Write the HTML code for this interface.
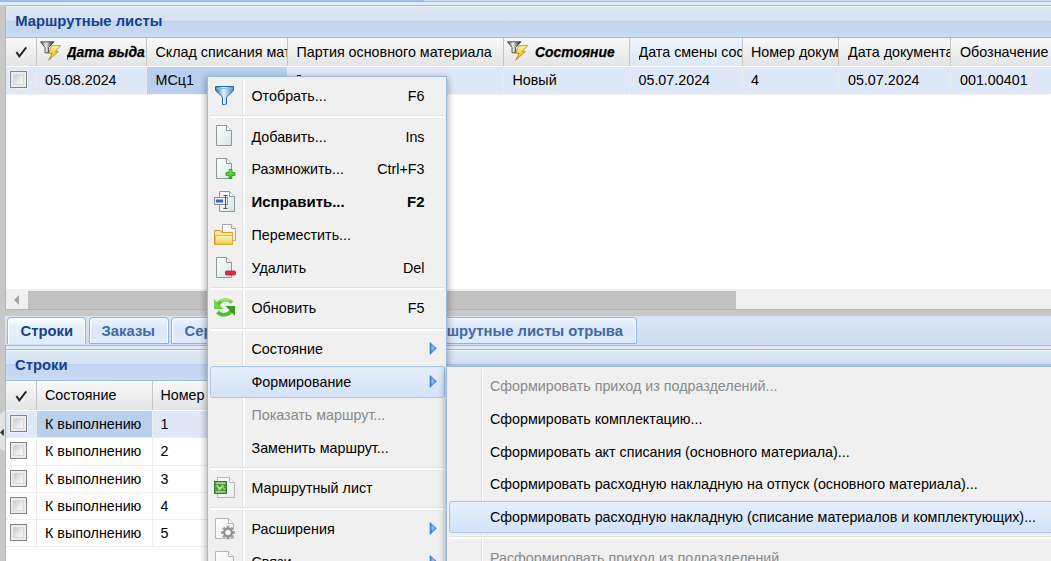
<!DOCTYPE html><html><head><meta charset="utf-8"><style>
*{margin:0;padding:0;box-sizing:border-box}
html,body{width:1051px;height:561px;overflow:hidden;background:#c8c8c8;position:relative;font-family:"Liberation Sans",sans-serif}
.a{position:absolute}
.t{position:absolute;white-space:nowrap;line-height:16px}
.hdrpanel{background:linear-gradient(to bottom,#f2f6fb 0,#f2f6fb 1px,#dce7f5 1px,#d5e2f3 15px,#b9cfee 15px,#b9cfee 16px,#c3d6f0 16px,#c6d8f1 26px,#cddcf2 31px)}.hdrpanel2{background:linear-gradient(to bottom,#f2f6fb 0,#f2f6fb 1px,#dce7f5 1px,#d5e2f3 14px,#b9cfee 14px,#b9cfee 15px,#c3d6f0 15px,#c6d8f1 25px,#cddcf2 30px)}
.gh{background:linear-gradient(to bottom,#f9f9f9,#e3e4e6)}
.ghov{background:linear-gradient(to bottom,#eef4fc 0,#dde9f9 100%)}
.cb{position:absolute;width:17px;height:17px;border:1px solid #858585;background:#ececec;box-shadow:0 0 0 1px rgba(255,255,255,0.45)}.cb::after{content:'';position:absolute;left:2px;top:2px;width:11px;height:11px;box-sizing:border-box;border:1px solid #d6d9de;background:linear-gradient(135deg,#c3c8d2 0,#e9eaec 55%,#f7f7f7 100%)}
.sep{position:absolute;width:1px;background:#c4c4c4}
</style></head><body><svg width="0" height="0" style="position:absolute"><defs>
<linearGradient id="gDoc" x1="0" y1="0" x2="1" y2="1"><stop offset="0" stop-color="#ffffff"/><stop offset="0.5" stop-color="#eaf3f3"/><stop offset="1" stop-color="#d3e4e4"/></linearGradient>
<linearGradient id="gDocW" x1="0" y1="0" x2="1" y2="1"><stop offset="0" stop-color="#ffffff"/><stop offset="1" stop-color="#ececec"/></linearGradient>
<linearGradient id="gFun" x1="0" y1="0" x2="1" y2="0"><stop offset="0" stop-color="#2f6aa9"/><stop offset="0.45" stop-color="#e6f3fb"/><stop offset="1" stop-color="#3b86c9"/></linearGradient>
<linearGradient id="gFunG" x1="0" y1="0" x2="1" y2="0"><stop offset="0" stop-color="#4a4a4a"/><stop offset="0.4" stop-color="#eeeeee"/><stop offset="0.75" stop-color="#6a6a6a"/><stop offset="1" stop-color="#2e2e2e"/></linearGradient>
<linearGradient id="gBolt" x1="0" y1="0" x2="0" y2="1"><stop offset="0" stop-color="#fff6b0"/><stop offset="0.5" stop-color="#f3d23a"/><stop offset="1" stop-color="#e8b820"/></linearGradient>
<linearGradient id="gGreen" x1="0" y1="0" x2="0" y2="1"><stop offset="0" stop-color="#9be86a"/><stop offset="1" stop-color="#3aa51e"/></linearGradient>
<linearGradient id="gPlus" x1="0" y1="0" x2="0" y2="1"><stop offset="0" stop-color="#7ee05a"/><stop offset="1" stop-color="#34b21c"/></linearGradient>
<linearGradient id="gFold" x1="0" y1="0" x2="0" y2="1"><stop offset="0" stop-color="#fff3c2"/><stop offset="1" stop-color="#f1cf3e"/></linearGradient>
<linearGradient id="gArr" x1="0" y1="0" x2="1" y2="0"><stop offset="0" stop-color="#2b67c6"/><stop offset="1" stop-color="#83b0ec"/></linearGradient>
<linearGradient id="gHi" x1="0" y1="0" x2="0" y2="1"><stop offset="0" stop-color="#e7f0fc"/><stop offset="1" stop-color="#d3e3f9"/></linearGradient>
<radialGradient id="ag" cx="0.45" cy="0.45" r="0.6"><stop offset="0" stop-color="#9cc6f5"/><stop offset="0.6" stop-color="#4f8fe0"/><stop offset="1" stop-color="#2a68cc"/></radialGradient>
</defs></svg>
<div class="a" style="left:0;top:0;width:424px;height:1px;background:#a0bee7"></div>
<div class="a" style="left:424px;top:0;width:627px;height:1px;background:#d3deee"></div>
<div class="a" style="left:0;top:1px;width:1051px;height:1px;background:#99bbe8"></div>
<div class="a" style="left:0;top:2px;width:1051px;height:3px;background:#deecfd"></div>
<div class="a" style="left:5px;top:5px;width:1046px;height:305px;background:#fff;border:1px solid #99bbe8;border-right:none"></div>
<div class="a hdrpanel" style="left:6px;top:6px;width:1045px;height:31px"></div>
<div class="a" style="left:6px;top:37px;width:1045px;height:1px;background:#99bbe8"></div>
<div class="t" style="left:15.2px;top:12.5px;font-size:14.8px;font-weight:bold;color:#15428b;">Маршрутные листы</div>
<div class="a gh" style="left:6px;top:38px;width:1045px;height:28px"></div>
<div class="a" style="left:6px;top:66px;width:1045px;height:1px;background:#fff"></div>
<div class="sep" style="left:36px;top:38px;height:28px"></div>
<div class="sep" style="left:146px;top:38px;height:28px"></div>
<div class="sep" style="left:287px;top:38px;height:28px"></div>
<div class="sep" style="left:503px;top:38px;height:28px"></div>
<div class="sep" style="left:629px;top:38px;height:28px"></div>
<div class="sep" style="left:742px;top:38px;height:28px"></div>
<div class="sep" style="left:838px;top:38px;height:28px"></div>
<div class="sep" style="left:950px;top:38px;height:28px"></div>
<div class="a ghov" style="left:630px;top:38px;width:112px;height:28px"></div>
<svg class="a" style="left:15px;top:46px" width="13" height="13" viewBox="0 0 13 13"><path d="M1.4 6 L4.3 10.3 L11.3 1.4" fill="none" stroke="#222" stroke-width="1.9"/></svg>
<svg class="a" style="left:39px;top:40px" width="23" height="23" viewBox="39 40 23 23"><path d="M40.5 41.8 H54 L48.5 47.5 V52.8 H45 V47.5 Z" fill="url(#gFunG)" stroke="#4a4a4a" stroke-width="0.9"/><path d="M51.5 45.6 H60.6 L55.2 51.6 H58.4 L48.6 60.2 L52.2 53.4 H48.8 Z" fill="url(#gBolt)" stroke="#a07818" stroke-width="0.7"/></svg>
<div class="t" style="left:66.5px;top:44px;font-size:13.9px;font-weight:bold;color:#000;font-style:italic;-webkit-text-stroke:0.25px #000;width:79px;overflow:hidden">Дата выда</div>
<div class="t" style="left:155.5px;top:44px;font-size:14.3px;font-weight:normal;color:#000;width:131px;overflow:hidden">Склад списания мат</div>
<div class="t" style="left:296.5px;top:44px;font-size:14.3px;font-weight:normal;color:#000;">Партия основного материала</div>
<svg class="a" style="left:506px;top:40px" width="23" height="23" viewBox="506 40 23 23"><path d="M507.5 41.8 H521 L515.5 47.5 V52.8 H512 V47.5 Z" fill="url(#gFunG)" stroke="#4a4a4a" stroke-width="0.9"/><path d="M518.5 45.6 H527.6 L522.2 51.6 H525.4 L515.6 60.2 L519.2 53.4 H515.8 Z" fill="url(#gBolt)" stroke="#a07818" stroke-width="0.7"/></svg>
<div class="t" style="left:535px;top:44px;font-size:13.9px;font-weight:bold;color:#000;font-style:italic;-webkit-text-stroke:0.25px #000">Состояние</div>
<div class="t" style="left:638.5px;top:44px;font-size:14.3px;font-weight:normal;color:#000;width:103px;overflow:hidden">Дата смены сос</div>
<div class="t" style="left:751px;top:44px;font-size:14.3px;font-weight:normal;color:#000;width:87px;overflow:hidden">Номер докум</div>
<div class="t" style="left:848px;top:44px;font-size:14.3px;font-weight:normal;color:#000;width:102px;overflow:hidden">Дата документа</div>
<div class="t" style="left:960px;top:44px;font-size:14.3px;font-weight:normal;color:#000;">Обозначение</div>
<div class="a" style="left:6px;top:67px;width:1045px;height:28px;background:#dfe8f6;border-bottom:1px dotted #fff"></div>
<div class="a" style="left:147px;top:67px;width:140px;height:27px;background:#b8cfee"></div>
<div class="a" style="left:36px;top:67px;width:1px;height:27px;background:#ebebeb"></div>
<div class="a" style="left:146px;top:67px;width:1px;height:27px;background:#ebebeb"></div>
<div class="a" style="left:287px;top:67px;width:1px;height:27px;background:#ebebeb"></div>
<div class="a" style="left:503px;top:67px;width:1px;height:27px;background:#ebebeb"></div>
<div class="a" style="left:629px;top:67px;width:1px;height:27px;background:#ebebeb"></div>
<div class="a" style="left:742px;top:67px;width:1px;height:27px;background:#ebebeb"></div>
<div class="a" style="left:838px;top:67px;width:1px;height:27px;background:#ebebeb"></div>
<div class="a" style="left:950px;top:67px;width:1px;height:27px;background:#ebebeb"></div>
<div class="cb" style="left:10px;top:71px"></div>
<div class="t" style="left:45px;top:71.8px;font-size:14.3px;font-weight:normal;color:#000;">05.08.2024</div>
<div class="t" style="left:155.5px;top:71.8px;font-size:14.3px;font-weight:normal;color:#000;">МСц1</div>
<div class="t" style="left:512.5px;top:71.8px;font-size:14.3px;font-weight:normal;color:#000;">Новый</div>
<div class="t" style="left:638.5px;top:71.8px;font-size:14.3px;font-weight:normal;color:#000;">05.07.2024</div>
<div class="t" style="left:751px;top:71.8px;font-size:14.3px;font-weight:normal;color:#000;">4</div>
<div class="t" style="left:848px;top:71.8px;font-size:14.3px;font-weight:normal;color:#000;">05.07.2024</div>
<div class="t" style="left:960px;top:71.8px;font-size:14.3px;font-weight:normal;color:#000;">001.00401</div>
<div class="a" style="left:297px;top:75px;width:4px;height:1px;background:#111"></div>
<div class="a" style="left:6px;top:289px;width:1045px;height:20px;background:#f0f0f0"></div>
<div class="a" style="left:28px;top:291px;width:708px;height:18px;background:#c1c1c1"></div>
<svg class="a" style="left:14px;top:295px" width="6" height="10"><path d="M5 0 L0 5 L5 10 Z" fill="#a3a3a3"/></svg>
<div class="a" style="left:5px;top:309px;width:1046px;height:1px;background:#99bbe8"></div>
<div class="a" style="left:5px;top:345px;width:1046px;height:216px;background:#fff;border-left:1px solid #99bbe8"></div>
<div class="a" style="left:5px;top:316px;width:1046px;height:29px;background:linear-gradient(to bottom,#dce7f5,#cddcf2)"></div>
<div class="a" style="left:5px;top:344px;width:1046px;height:1px;background:#d5e2f4"></div>
<div class="a" style="left:7px;top:317px;width:79px;height:27px;background:linear-gradient(to bottom,#ffffff 0,#e6f0fc 9px,#deecfd 100%);border:1px solid #8db2e3;border-bottom:none;border-radius:4px 4px 0 0;box-shadow:inset 1px 1px 0 #fff,inset -1px 0 0 #fff"></div>
<div class="t" style="left:20.6px;top:322.5px;font-size:14.8px;font-weight:bold;color:#15428b;">Строки</div>
<div class="a" style="left:89px;top:317px;width:80px;height:27px;background:linear-gradient(to bottom,#eef4fd 0,#dce8f9 10px,#deebfc 100%);border:1px solid #8db2e3;border-radius:4px 4px 0 0;box-shadow:inset 1px 1px 0 #fff,inset -1px 0 0 #fff"></div>
<div class="t" style="left:101.6px;top:322.5px;font-size:14.8px;font-weight:bold;color:#416aa3;">Заказы</div>
<div class="a" style="left:171px;top:317px;width:230px;height:27px;background:linear-gradient(to bottom,#eef4fd 0,#dce8f9 10px,#deebfc 100%);border:1px solid #8db2e3;border-radius:4px 4px 0 0;box-shadow:inset 1px 1px 0 #fff,inset -1px 0 0 #fff"></div>
<div class="t" style="left:184.6px;top:322.5px;font-size:14.8px;font-weight:bold;color:#416aa3;">Серии материалов</div>
<div class="a" style="left:404px;top:317px;width:233px;height:27px;background:linear-gradient(to bottom,#eef4fd 0,#dce8f9 10px,#deebfc 100%);border:1px solid #8db2e3;border-radius:4px 4px 0 0;box-shadow:inset 1px 1px 0 #fff,inset -1px 0 0 #fff"></div>
<div class="t" style="left:417px;top:322.5px;font-size:14.8px;font-weight:bold;color:#416aa3;">Маршрутные листы отрыва</div>
<div class="a" style="left:5px;top:345px;width:1046px;height:1px;background:#99bbe8"></div>
<div class="a" style="left:6px;top:346px;width:1045px;height:3px;background:#deecfd"></div>
<div class="a" style="left:6px;top:349px;width:1045px;height:1px;background:#99bbe8"></div>
<div class="a hdrpanel2" style="left:6px;top:350px;width:1045px;height:30px"></div>
<div class="a" style="left:6px;top:380px;width:1045px;height:1px;background:#99bbe8"></div>
<div class="t" style="left:15px;top:356.5px;font-size:14.8px;font-weight:bold;color:#15428b;">Строки</div>
<div class="a gh" style="left:6px;top:381px;width:1045px;height:29px"></div>
<div class="a" style="left:6px;top:410px;width:1045px;height:1px;background:#fff"></div>
<div class="sep" style="left:36px;top:381px;height:29px"></div>
<div class="sep" style="left:152px;top:381px;height:29px"></div>
<svg class="a" style="left:15px;top:390px" width="13" height="13" viewBox="0 0 13 13"><path d="M1.4 6 L4.3 10.3 L11.3 1.4" fill="none" stroke="#222" stroke-width="1.9"/></svg>
<div class="t" style="left:45px;top:387px;font-size:14.3px;font-weight:normal;color:#000;">Состояние</div>
<div class="t" style="left:160.5px;top:387px;font-size:14.3px;font-weight:normal;color:#000;">Номер</div>
<div class="a" style="left:6px;top:411px;width:1045px;height:26px;background:#dfe8f6"></div>
<div class="a" style="left:37px;top:411px;width:115px;height:26px;background:#b8cfee"></div>
<div class="a" style="left:6px;top:437px;width:1045px;height:1px;background:#ededed"></div>
<div class="a" style="left:36px;top:411px;width:1px;height:26px;background:#ededed"></div>
<div class="a" style="left:152px;top:411px;width:1px;height:26px;background:#ededed"></div>
<div class="cb" style="left:10px;top:415px"></div>
<div class="t" style="left:45px;top:416px;font-size:14.3px;font-weight:normal;color:#000;">К выполнению</div>
<div class="t" style="left:160.5px;top:416px;font-size:14.3px;font-weight:normal;color:#000;">1</div>
<div class="a" style="left:6px;top:465px;width:1045px;height:1px;background:#ededed"></div>
<div class="a" style="left:36px;top:438px;width:1px;height:27px;background:#ededed"></div>
<div class="a" style="left:152px;top:438px;width:1px;height:27px;background:#ededed"></div>
<div class="cb" style="left:10px;top:442px"></div>
<div class="t" style="left:45px;top:443px;font-size:14.3px;font-weight:normal;color:#000;">К выполнению</div>
<div class="t" style="left:160.5px;top:443px;font-size:14.3px;font-weight:normal;color:#000;">2</div>
<div class="a" style="left:6px;top:492px;width:1045px;height:1px;background:#ededed"></div>
<div class="a" style="left:36px;top:466px;width:1px;height:26px;background:#ededed"></div>
<div class="a" style="left:152px;top:466px;width:1px;height:26px;background:#ededed"></div>
<div class="cb" style="left:10px;top:470px"></div>
<div class="t" style="left:45px;top:471px;font-size:14.3px;font-weight:normal;color:#000;">К выполнению</div>
<div class="t" style="left:160.5px;top:471px;font-size:14.3px;font-weight:normal;color:#000;">3</div>
<div class="a" style="left:6px;top:519px;width:1045px;height:1px;background:#ededed"></div>
<div class="a" style="left:36px;top:493px;width:1px;height:26px;background:#ededed"></div>
<div class="a" style="left:152px;top:493px;width:1px;height:26px;background:#ededed"></div>
<div class="cb" style="left:10px;top:497px"></div>
<div class="t" style="left:45px;top:498px;font-size:14.3px;font-weight:normal;color:#000;">К выполнению</div>
<div class="t" style="left:160.5px;top:498px;font-size:14.3px;font-weight:normal;color:#000;">4</div>
<div class="a" style="left:6px;top:546px;width:1045px;height:1px;background:#ededed"></div>
<div class="a" style="left:36px;top:520px;width:1px;height:26px;background:#ededed"></div>
<div class="a" style="left:152px;top:520px;width:1px;height:26px;background:#ededed"></div>
<div class="cb" style="left:10px;top:524px"></div>
<div class="t" style="left:45px;top:525px;font-size:14.3px;font-weight:normal;color:#000;">К выполнению</div>
<div class="t" style="left:160.5px;top:525px;font-size:14.3px;font-weight:normal;color:#000;">5</div>
<svg class="a" style="left:0;top:405px" width="5" height="52" viewBox="0 405 5 52"><path d="M0 414 L5 410.5 V451.5 L0 448.5 Z" fill="#e2e2e2"/><path d="M3.8 428.8 L0 432.4 L3.8 436 Z" fill="#333"/></svg>
<div class="a" style="left:207px;top:76px;width:240px;height:500px;background:#f0f0f0;border:1px solid #99bbe8;box-shadow:0 3px 7px 1px rgba(0,0,0,0.33)"></div>
<div class="a" style="left:242px;top:80px;width:1px;height:481px;background:#e0e0e0"></div>
<div class="a" style="left:243px;top:80px;width:2px;height:481px;background:#fff"></div>
<div class="a" style="left:210px;top:115px;width:235px;height:1px;background:#e0e0e0"></div>
<div class="a" style="left:210px;top:116px;width:235px;height:2px;background:#fff"></div>
<div class="a" style="left:210px;top:287px;width:235px;height:1px;background:#e0e0e0"></div>
<div class="a" style="left:210px;top:288px;width:235px;height:2px;background:#fff"></div>
<div class="a" style="left:210px;top:328px;width:235px;height:1px;background:#e0e0e0"></div>
<div class="a" style="left:210px;top:329px;width:235px;height:2px;background:#fff"></div>
<div class="a" style="left:210px;top:467px;width:235px;height:1px;background:#e0e0e0"></div>
<div class="a" style="left:210px;top:468px;width:235px;height:2px;background:#fff"></div>
<div class="a" style="left:210px;top:507px;width:235px;height:1px;background:#e0e0e0"></div>
<div class="a" style="left:210px;top:508px;width:235px;height:2px;background:#fff"></div>
<div class="a" style="left:210px;top:366px;width:235px;height:32px;border:1px solid #a9c4ec;border-radius:3px;background:linear-gradient(to bottom,#e6effb,#d2e2f8)"></div>
<div class="t" style="left:251.5px;top:88.4px;font-size:14.3px;font-weight:normal;color:#000;">Отобрать...</div>
<div class="t" style="right:626.5px;top:88.4px;font-size:14.3px;font-weight:normal;text-align:right">F6</div>
<div class="t" style="left:251.5px;top:129.4px;font-size:14.3px;font-weight:normal;color:#000;">Добавить...</div>
<div class="t" style="right:626.5px;top:129.4px;font-size:14.3px;font-weight:normal;text-align:right">Ins</div>
<div class="t" style="left:251.5px;top:161.4px;font-size:14.3px;font-weight:normal;color:#000;">Размножить...</div>
<div class="t" style="right:626.5px;top:161.4px;font-size:14.3px;font-weight:normal;text-align:right">Ctrl+F3</div>
<div class="t" style="left:251.5px;top:194.4px;font-size:15px;font-weight:bold;color:#000;">Исправить...</div>
<div class="t" style="right:626.5px;top:194.4px;font-size:15px;font-weight:bold;text-align:right">F2</div>
<div class="t" style="left:251.5px;top:227.4px;font-size:14.3px;font-weight:normal;color:#000;">Переместить...</div>
<div class="t" style="left:251.5px;top:260.4px;font-size:14.3px;font-weight:normal;color:#000;">Удалить</div>
<div class="t" style="right:626.5px;top:260.4px;font-size:14.3px;font-weight:normal;text-align:right">Del</div>
<div class="t" style="left:251.5px;top:300.4px;font-size:14.3px;font-weight:normal;color:#000;">Обновить</div>
<div class="t" style="right:626.5px;top:300.4px;font-size:14.3px;font-weight:normal;text-align:right">F5</div>
<div class="t" style="left:251.5px;top:341px;font-size:14.3px;font-weight:normal;color:#000;">Состояние</div>
<svg class="a" style="left:429px;top:341.5px" width="9" height="14"><path d="M1 0.5 L7.4 6.3 L1 12.4 Z" fill="url(#ag)" stroke="#3474d4" stroke-width="0.6"/></svg>
<div class="t" style="left:251.5px;top:374px;font-size:14.3px;font-weight:normal;color:#000;">Формирование</div>
<svg class="a" style="left:429px;top:374.5px" width="9" height="14"><path d="M1 0.5 L7.4 6.3 L1 12.4 Z" fill="url(#ag)" stroke="#3474d4" stroke-width="0.6"/></svg>
<div class="t" style="left:251.5px;top:407px;font-size:14.3px;font-weight:normal;color:#8a8a8a;">Показать маршрут...</div>
<div class="t" style="left:251.5px;top:440px;font-size:14.3px;font-weight:normal;color:#000;">Заменить маршрут...</div>
<div class="t" style="left:251.5px;top:480.4px;font-size:14.3px;font-weight:normal;color:#000;">Маршрутный лист</div>
<div class="t" style="left:251.5px;top:521px;font-size:14.3px;font-weight:normal;color:#000;">Расширения</div>
<svg class="a" style="left:429px;top:521.5px" width="9" height="14"><path d="M1 0.5 L7.4 6.3 L1 12.4 Z" fill="url(#ag)" stroke="#3474d4" stroke-width="0.6"/></svg>
<div class="t" style="left:251.5px;top:554px;font-size:14.3px;font-weight:normal;color:#000;">Связи</div>
<svg class="a" style="left:429px;top:554.5px" width="9" height="14"><path d="M1 0.5 L7.4 6.3 L1 12.4 Z" fill="url(#ag)" stroke="#3474d4" stroke-width="0.6"/></svg>
<svg class="a" style="left:212px;top:83px" width="26" height="25" viewBox="212 83 26 25"><path d="M215.5 86.5 H233.5 V90.5 L226.5 97 V104 L224.5 104.5 H222.5 V97 L215.5 90.5 Z" fill="url(#gFun)" stroke="#2d6aa8" stroke-width="1"/><path d="M216.5 88.5 H232.5" stroke="#7dc0f0" stroke-width="1"/></svg>
<svg class="a" style="left:215px;top:124px" width="19" height="23" viewBox="215 124 19 23"><path d="M216.5 125.5 H226.5 L231.5 130.5 V145.5 H216.5 Z" fill="url(#gDoc)" stroke="#8a9a9a" stroke-width="1"/><path d="M226.5 125.5 V130.5 H231.5" fill="#f4f8f8" stroke="#8a9a9a" stroke-width="1"/></svg>
<svg class="a" style="left:213px;top:155px" width="24" height="26" viewBox="213 155 24 26"><path d="M216.5 158.5 H226.5 L231.5 163.5 V178.5 H216.5 Z" fill="url(#gDoc)" stroke="#8a9a9a" stroke-width="1"/><path d="M226.5 158.5 V163.5 H231.5" fill="#f4f8f8" stroke="#8a9a9a" stroke-width="1"/><path d="M229 169.5 H232 V172.5 H235 V175.5 H232 V178.5 H229 V175.5 H226 V172.5 H229 Z" fill="url(#gPlus)" stroke="#2f9a18" stroke-width="0.8"/></svg>
<svg class="a" style="left:212px;top:188px" width="26" height="26" viewBox="212 188 26 26"><path d="M219.5 191.5 H229.5 L234.5 196.5 V211.5 H219.5 Z" fill="url(#gDoc)" stroke="#8a9a9a" stroke-width="1"/><path d="M229.5 191.5 V196.5 H234.5" fill="#f4f8f8" stroke="#8a9a9a" stroke-width="1"/><rect x="214.5" y="197.5" width="13" height="7" fill="#f4f4f4" stroke="#8c8c8c" stroke-width="1"/><rect x="216" y="199.5" width="7" height="3" fill="#3a5fd6"/><path d="M223.5 195.5 H227.5 M225.5 195.5 V208.5 M223.5 208.5 H227.5" stroke="#555" stroke-width="1"/></svg>
<svg class="a" style="left:212px;top:222px" width="26" height="25" viewBox="212 222 26 25"><path d="M222.5 224.5 H231.5 L235.5 228.5 V240.5 H222.5 Z" fill="url(#gDocW)" stroke="#a8a8a8" stroke-width="1"/><path d="M231.5 224.5 V228.5 H235.5" fill="#f4f8f8" stroke="#a8a8a8" stroke-width="1"/><path d="M214.5 230.5 H220.5 L222 232.5 H232.5 V244.5 H214.5 Z" fill="#f7e39a" stroke="#d79a2a" stroke-width="1"/><path d="M215.5 235.5 H232.5 V244.5 H215.5 Z" fill="url(#gFold)" stroke="#e0a83a" stroke-width="0.8"/></svg>
<svg class="a" style="left:213px;top:254px" width="25" height="26" viewBox="213 254 25 26"><path d="M216.5 257.5 H226.5 L231.5 262.5 V277.5 H216.5 Z" fill="url(#gDoc)" stroke="#8a9a9a" stroke-width="1"/><path d="M226.5 257.5 V262.5 H231.5" fill="#f4f8f8" stroke="#8a9a9a" stroke-width="1"/><rect x="225.5" y="271" width="10" height="4" rx="1" fill="#e03040" stroke="#b01c2a" stroke-width="0.8"/></svg>
<svg class="a" style="left:212px;top:296px" width="26" height="23" viewBox="212 296 26 23"><path d="M218 304.5 A8 6.8 0 0 1 232 302.5" fill="none" stroke="url(#gGreen)" stroke-width="3.6"/><path d="M214 299 L214 309 L223.5 309 Z" fill="#6fd24a"/><path d="M231.5 310 A8 6.8 0 0 1 217.5 312" fill="none" stroke="#4bbf2c" stroke-width="3.6"/><path d="M235 316 L235 306 L225.5 306 Z" fill="#3a9a1e"/></svg>
<svg class="a" style="left:212px;top:475px" width="25" height="25" viewBox="212 475 25 25"><path d="M217.5 477.5 H229.5 L234.5 482.5 V497.5 H217.5 Z" fill="url(#gDocW)" stroke="#b8b8b8" stroke-width="1"/><path d="M229.5 477.5 V482.5 H234.5" fill="#f4f8f8" stroke="#b8b8b8" stroke-width="1"/><rect x="214.5" y="481.5" width="12" height="12" fill="#4f9a3a" stroke="#3a7d28" stroke-width="1"/><path d="M215.8 483.2 H225.2 M215.8 491.8 H225.2" stroke="#c6e6b4" stroke-width="1.3"/><path d="M216.5 485.5 L221 489.5 M223.5 485.5 L218.5 489.8" stroke="#bfe3a8" stroke-width="1.6"/><path d="M221.5 485.5 L224.8 489.5" stroke="#9fd27f" stroke-width="1.2"/></svg>
<svg class="a" style="left:212px;top:515px" width="26" height="26" viewBox="212 515 26 26"><path d="M215.5 518.5 H228.5 L233.5 523.5 V538.5 H215.5 Z" fill="url(#gDocW)" stroke="#b4b4b4" stroke-width="1"/><path d="M228.5 518.5 V523.5 H233.5" fill="#f4f8f8" stroke="#b4b4b4" stroke-width="1"/><circle cx="228" cy="532.5" r="6.3" fill="#f2f2f2" opacity="0.9"/><rect x="226.5" y="525.7" width="3" height="3" fill="#a2a2a2" transform="rotate(0 228 532.5)"/><rect x="226.5" y="525.7" width="3" height="3" fill="#a2a2a2" transform="rotate(45 228 532.5)"/><rect x="226.5" y="525.7" width="3" height="3" fill="#a2a2a2" transform="rotate(90 228 532.5)"/><rect x="226.5" y="525.7" width="3" height="3" fill="#a2a2a2" transform="rotate(135 228 532.5)"/><rect x="226.5" y="525.7" width="3" height="3" fill="#a2a2a2" transform="rotate(180 228 532.5)"/><rect x="226.5" y="525.7" width="3" height="3" fill="#a2a2a2" transform="rotate(225 228 532.5)"/><rect x="226.5" y="525.7" width="3" height="3" fill="#a2a2a2" transform="rotate(270 228 532.5)"/><rect x="226.5" y="525.7" width="3" height="3" fill="#a2a2a2" transform="rotate(315 228 532.5)"/><circle cx="228" cy="532.5" r="3.8" fill="none" stroke="#8f8f8f" stroke-width="2"/><rect x="226.5" y="531.0" width="3" height="3" fill="#fafafa"/></svg>
<svg class="a" style="left:214px;top:550px" width="21" height="23" viewBox="214 550 21 23"><path d="M215.5 551.5 H228.5 L233.5 556.5 V571.5 H215.5 Z" fill="url(#gDocW)" stroke="#b4b4b4" stroke-width="1"/><path d="M228.5 551.5 V556.5 H233.5" fill="#f4f8f8" stroke="#b4b4b4" stroke-width="1"/></svg>
<div class="a" style="left:446px;top:366px;width:620px;height:220px;background:#f0f0f0;border:1px solid #99bbe8;box-shadow:0 3px 7px 1px rgba(0,0,0,0.33)"></div>
<div class="a" style="left:481px;top:370px;width:1px;height:200px;background:#e0e0e0"></div>
<div class="a" style="left:482px;top:370px;width:1px;height:200px;background:#fff"></div>
<div class="a" style="left:449px;top:536px;width:610px;height:1px;background:#e0e0e0"></div>
<div class="a" style="left:449px;top:537px;width:610px;height:2px;background:#fff"></div>
<div class="a" style="left:449px;top:501px;width:620px;height:32px;border:1px solid #a9c4ec;border-radius:3px;background:linear-gradient(to bottom,#e6effb,#d2e2f8)"></div>
<div class="t" style="left:489.9px;top:378px;font-size:14.3px;font-weight:normal;color:#8a8a8a;">Сформировать приход из подразделений...</div>
<div class="t" style="left:489.9px;top:411px;font-size:14.3px;font-weight:normal;color:#000;">Сформировать комплектацию...</div>
<div class="t" style="left:489.9px;top:443.6px;font-size:14.3px;font-weight:normal;color:#000;">Сформировать акт списания (основного материала)...</div>
<div class="t" style="left:489.9px;top:476px;font-size:14.3px;font-weight:normal;color:#000;">Сформировать расходную накладную на отпуск (основного материала)...</div>
<div class="t" style="left:489.9px;top:508.6px;font-size:14.3px;font-weight:normal;color:#000;">Сформировать расходную накладную (списание материалов и комплектующих)...</div>
<div class="t" style="left:489.9px;top:550px;font-size:14.3px;font-weight:normal;color:#8a8a8a;">Расформировать приход из подразделений</div></body></html>
